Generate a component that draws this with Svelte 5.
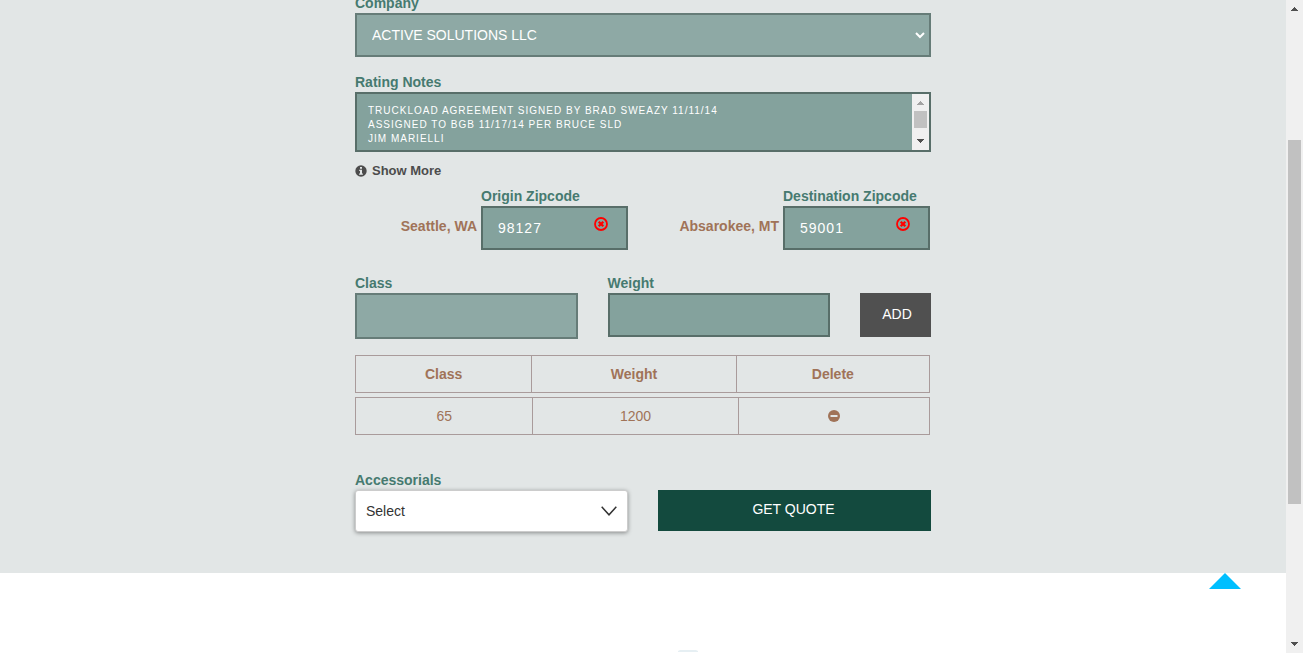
<script>
  let company = $state('ACTIVE SOLUTIONS LLC');
  let notes = $state(
    'TRUCKLOAD AGREEMENT SIGNED BY BRAD SWEAZY 11/11/14\nASSIGNED TO BGB 11/17/14 PER BRUCE SLD\nJIM MARIELLI'
  );
  let places = $state([
    { id: 'origin', label: 'Origin Zipcode', city: 'Seattle, WA', zip: '98127' },
    { id: 'destination', label: 'Destination Zipcode', city: 'Absarokee, MT', zip: '59001' }
  ]);
  let freightClass = $state('');
  let weight = $state('');
  let items = $state([{ cls: '65', weight: '1200' }]);

  function add() {
    if (weight) items.push({ cls: freightClass, weight });
  }
</script>

{#snippet arrows(dir)}
  <svg class="arrow" width="7" height="4" viewBox="0 0 7 4" shape-rendering="crispEdges" aria-hidden="true">
    {#if dir === 'up'}
      <path d="M3 0h1v1h1v1h1v1h1v1H0V3h1V2h1V1h1z" />
    {:else}
      <path d="M0 0h7v1H6v1H5v1H4v1H3V3H2V2H1V1H0z" />
    {/if}
  </svg>
{/snippet}

<div class="page">
  <main>
    <section class="quote">
      <form onsubmit={(e) => e.preventDefault()}>
        <div class="field">
          <label for="company">Company</label>
          <div class="stack">
            <select id="company" class="control muted" bind:value={company}>
              <option>ACTIVE SOLUTIONS LLC</option>
            </select>
            <svg class="chevron" width="10" height="7" viewBox="0 0 10 7" aria-hidden="true">
              <path d="M1 1l4 4 4-4" fill="none" stroke="#fff" stroke-width="2" />
            </svg>
          </div>
        </div>

        <div class="field notes">
          <label for="notes">Rating Notes</label>
          <div class="notes-box">
            <textarea id="notes" rows="3" bind:value={notes}></textarea>
            <div class="bar small">
              {@render arrows('up')}
              <div class="thumb"></div>
              {@render arrows('down')}
            </div>
          </div>
        </div>

        <button type="button" class="more">
          <svg width="12" height="12" viewBox="0 0 12 12" aria-hidden="true">
            <circle cx="6" cy="6" r="5.7" fill="#4c4c4c" />
            <path d="M5 2h2v1.7H5zM4.2 4.8H7v3.6h.9v1.3H4.1V8.4H5V6h-.8z" fill="#e2e6e6" />
          </svg>
          Show More
        </button>

        <div class="zips">
          {#each places as place}
            <div class="place">
              <span class="city">{place.city}</span>
              <div class="field zip">
                <label for={place.id}>{place.label}</label>
                <div class="stack">
                  <input id={place.id} class="control" bind:value={place.zip} />
                  <button type="button" class="clear" aria-label="Clear" onclick={() => (place.zip = '')}>
                    <svg width="14" height="14" viewBox="0 0 14 14" aria-hidden="true">
                      <circle cx="7" cy="7" r="6" fill="none" stroke="#f00" stroke-width="1.8" />
                      <path d="M4.7 4.7l4.6 4.6M9.3 4.7L4.7 9.3" stroke="#f00" stroke-width="2.3" />
                    </svg>
                  </button>
                </div>
              </div>
            </div>
          {/each}
        </div>

        <div class="entry">
          <div class="field">
            <label for="class">Class</label>
            <select id="class" class="control muted tall" bind:value={freightClass}>
              <option value=""></option>
              <option>65</option>
            </select>
          </div>
          <div class="field">
            <label for="weight">Weight</label>
            <input id="weight" class="control" bind:value={weight} />
          </div>
          <button type="button" class="add" onclick={add}>ADD</button>
        </div>

        <table>
          <thead>
            <tr><th>Class</th><th>Weight</th><th>Delete</th></tr>
          </thead>
          <tbody>
            {#each items as item, i}
              <tr>
                <td>{item.cls}</td>
                <td>{item.weight}</td>
                <td>
                  <button type="button" class="remove" aria-label="Delete" onclick={() => items.splice(i, 1)}>
                    <svg width="12" height="12" viewBox="0 0 12 12" aria-hidden="true">
                      <circle cx="6" cy="6" r="6" fill="#a07358" />
                      <rect x="2.5" y="5" width="7" height="2" fill="#e2e6e6" />
                    </svg>
                  </button>
                </td>
              </tr>
            {/each}
          </tbody>
        </table>

        <div class="actions">
          <div class="field">
            <label for="accessorials">Accessorials</label>
            <div class="stack">
              <select id="accessorials" class="picker">
                <option>Select</option>
              </select>
              <svg class="caret" width="16" height="10" viewBox="0 0 16 10" aria-hidden="true">
                <path d="M.7 .8L8 8.8l7.3-8" fill="none" stroke="#333" stroke-width="1.5" />
              </svg>
            </div>
          </div>
          <button type="submit" class="submit">GET QUOTE</button>
        </div>
      </form>
    </section>
    <footer>
      <a class="top" href="#app" aria-label="Back to top">
        <svg width="32" height="16" viewBox="0 0 32 16" aria-hidden="true"><path d="M16 0l16 16H0z" fill="#00bfff" /></svg>
      </a>
      <svg class="mark" width="20" height="3" viewBox="0 0 20 3" aria-hidden="true">
        <path d="M2 0h16l2 1v1H0V1z" fill="#e6eff3" />
      </svg>
    </footer>
  </main>
  <div class="bar large">
    {@render arrows('up')}
    <div class="thumb"></div>
    {@render arrows('down')}
  </div>
</div>

<style>
  :global(body) {
    margin: 0;
  }
  .page {
    display: flex;
    height: 100vh;
    overflow: hidden;
    font: 14px/20px 'Liberation Sans', Arial, sans-serif;
    background: #fff;
  }
  .page * {
    box-sizing: border-box;
  }
  main {
    flex: 1;
    min-width: 0;
    display: flex;
    flex-direction: column;
    overflow: hidden;
  }
  .quote {
    flex: none;
    margin-top: -7px;
    padding: 0 16px 41px;
    background: #e2e6e6;
  }
  form {
    max-width: 576px;
    margin: 0 auto;
  }
  button,
  input,
  select,
  textarea {
    font: inherit;
    margin: 0;
    border-radius: 0;
  }
  button {
    border: 0;
    padding: 0;
    background: none;
    cursor: pointer;
  }
  svg {
    display: block;
  }
  label {
    display: block;
    font-weight: bold;
    color: #467a70;
    white-space: nowrap;
  }
  .stack {
    display: grid;
    align-items: center;
  }
  .stack > * {
    grid-area: 1 / 1;
  }
  .control {
    display: block;
    width: 100%;
    min-width: 0;
    height: 44px;
    padding: 0 15px;
    border: 2px solid #586e69;
    background: #84a29d;
    color: #fff;
    letter-spacing: 1px;
    appearance: none;
    outline: 0;
  }
  .muted {
    border-color: #667c78;
    background: #8ea9a5;
    letter-spacing: normal;
  }
  .tall {
    height: 46px;
  }
  .chevron,
  .caret {
    justify-self: end;
    pointer-events: none;
  }
  .chevron {
    margin-right: 6px;
  }
  .notes {
    margin-top: 15px;
  }
  .notes-box {
    display: flex;
    height: 60px;
    border: 2px solid #586e69;
    background: #84a29d;
  }
  textarea {
    flex: 1;
    min-width: 0;
    padding: 10px 11px 0;
    border: 0;
    outline: 0;
    resize: none;
    overflow: hidden;
    background: none;
    color: #fff;
    font-size: 10px;
    line-height: 14px;
    letter-spacing: 1px;
  }
  .bar {
    display: flex;
    flex-direction: column;
    align-items: center;
    flex: none;
    width: 17px;
    background: #f0f0f0;
  }
  .arrow {
    flex: none;
    fill: #505050;
  }
  .arrow:first-child {
    margin: 7px 0 6px;
    fill: #a3a3a3;
  }
  .arrow:last-child {
    margin: auto 0 7px;
  }
  .large .arrow:first-child {
    fill: #505050;
  }
  .thumb {
    width: 13px;
    height: 17px;
    background: #c1c1c1;
  }
  .large .thumb {
    flex: none;
    height: calc(56% - 2px);
    margin-top: 123px;
  }
  .more {
    display: flex;
    align-items: center;
    gap: 5px;
    margin-top: 9px;
    color: #4c4c4c;
    font-size: 13px;
    font-weight: bold;
  }
  .zips {
    display: grid;
    grid-template-columns: 1fr 1fr;
    gap: 29px;
    margin: 5px 1px 0 0;
  }
  .place {
    display: flex;
    justify-content: flex-end;
    align-items: center;
    gap: 4px;
  }
  .city {
    padding-top: 16px;
    font-weight: bold;
    color: #a07358;
  }
  .zip {
    width: 147px;
  }
  .clear {
    justify-self: end;
    margin: 0 20px 8px 0;
  }
  .entry {
    display: grid;
    grid-template-columns: 1fr 1fr 71px;
    gap: 30px;
    margin-top: 23px;
  }
  .add {
    height: 44px;
    margin-top: 20px;
    padding: 0 0 2px 3px;
    background: #505050;
    color: #fff;
  }
  table {
    display: block;
    margin: 16px 1px 0 0;
    color: #a07358;
    text-align: center;
  }
  thead,
  tbody {
    display: block;
  }
  tr {
    display: grid;
    grid-template-columns: 177fr 206fr 192fr;
    height: 38px;
    margin-bottom: 4px;
    border: 1px solid #a99b9b;
  }
  thead tr {
    grid-template-columns: 176fr 205fr 194fr;
  }
  th,
  td {
    display: grid;
    place-items: center;
    padding: 0;
  }
  th + th,
  td + td {
    border-left: 1px solid #a99b9b;
  }
  .actions {
    display: grid;
    grid-template-columns: 1fr 1fr;
    gap: 30px;
    margin-top: 35px;
  }
  .picker {
    width: 100%;
    height: 42px;
    padding: 0 10px;
    border: 1px solid #ccc;
    border-radius: 3px;
    background: #fff;
    box-shadow: 0 1px 4px rgba(0, 0, 0, 0.4);
    color: #333;
    appearance: none;
    outline: 0;
  }
  .caret {
    margin-right: 11px;
  }
  .submit {
    height: 41px;
    margin-top: 20px;
    padding: 0 2px 3px 0;
    background: #134a3e;
    color: #fff;
  }
  footer {
    flex: 1;
    display: flex;
    flex-direction: column;
    justify-content: space-between;
    background: #fff;
  }
  .top {
    align-self: flex-end;
    margin-right: 45px;
  }
  .mark {
    align-self: center;
    margin-left: 90px;
  }
</style>
